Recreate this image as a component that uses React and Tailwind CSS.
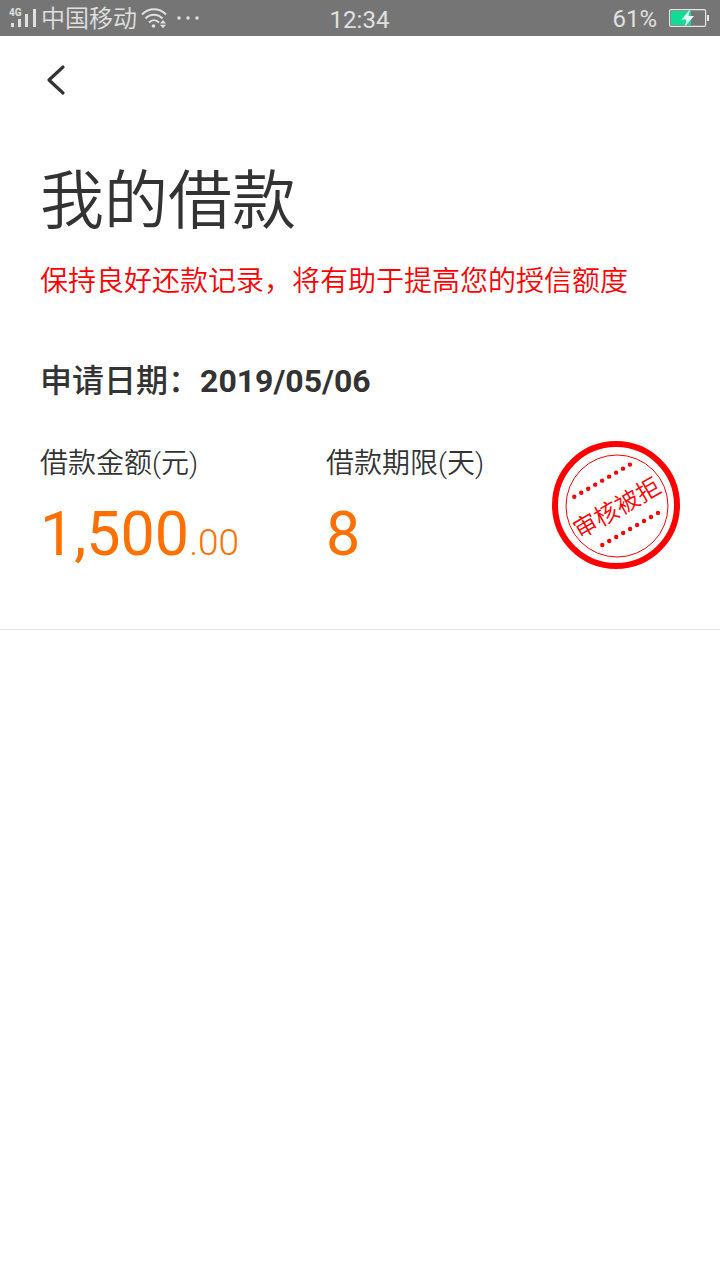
import React from 'react';

const loan = {
  date: '2019/05/06',
  amount: '1,500',
  cents: '.00',
  days: '8',
  status: '审核被拒',
};

function SignalIcon() {
  return (
    <svg width="28" height="22" viewBox="0 0 28 22" fill="#e0e0e0" aria-hidden="true">
      <text x="0" y="9" fontSize="10" fontWeight="700" fontFamily="Roboto">4G</text>
      <rect x="2" y="16" width="3" height="4" />
      <rect x="9" y="12" width="3" height="8" />
      <rect x="16" y="7" width="3" height="13" />
      <rect x="24" y="2" width="3" height="18" />
    </svg>
  );
}

function WifiIcon() {
  return (
    <svg width="26" height="22" viewBox="0 0 26 22" fill="none" stroke="#e0e0e0" strokeWidth="2" aria-hidden="true">
      <path d="M1 7.5C8 .6 18 .6 25 7.5" />
      <path d="M4.5 11.5C9.5 6.6 16.5 6.6 21.5 11.5" />
      <path d="M8 15.5C11 12.5 15 12.5 18 15.5" />
      <circle cx="12.5" cy="19" r="1.8" fill="#e0e0e0" stroke="none" />
      <path d="M19 16.5L22 13L25 16.5ZM19 17.7L22 21.2L25 17.7Z" fill="#e0e0e0" stroke="none" />
    </svg>
  );
}

function BatteryIcon() {
  return (
    <svg width="41" height="20" viewBox="0 0 41 20" fill="none" aria-hidden="true">
      <rect x="0.6" y="1.6" width="36" height="16.8" rx="1.5" stroke="#e6e6e6" strokeWidth="1.2" />
      <rect x="2" y="3" width="20" height="14" fill="#10dc96" />
      <rect x="38" y="7" width="2" height="6" fill="#e6e6e6" />
      <path d="M21 1.5L12.5 11.5H17.5L16 18.5L25 8H19.5Z" fill="#e6fff5" />
    </svg>
  );
}

function StatusBar() {
  return (
    <header className="grid h-9 grid-cols-3 items-center bg-[#757575] pr-[10px] pl-[9px] text-2xl text-[#e0e0e0]">
      <div className="flex items-center font-[350] whitespace-nowrap">
        <SignalIcon />
        <span className="ml-1 pt-[2px]">中国移动</span>
        <span className="ml-1"><WifiIcon /></span>
        <svg className="ml-2" width="26" height="6" viewBox="0 0 26 6" fill="#e0e0e0" aria-hidden="true">
          <circle cx="4" cy="3" r="1.8" />
          <circle cx="13" cy="3" r="1.8" />
          <circle cx="22" cy="3" r="1.8" />
        </svg>
      </div>
      <time className="pt-1 text-center">12:34</time>
      <div className="flex items-center justify-end gap-3">
        <span className="pt-[2px]">61%</span>
        <BatteryIcon />
      </div>
    </header>
  );
}

function Stamp({ label }) {
  return (
    <svg
      className="shrink-0"
      width="128"
      height="128"
      viewBox="0 0 128 128"
      fill="none"
      stroke="#ff0000"
      role="img"
      aria-label={label}
    >
      <circle cx="64" cy="64" r="61" strokeWidth="6" />
      <circle cx="65" cy="65" r="51" strokeWidth="1" />
      <path d="M22.3 55.7L78 23.6" strokeWidth="4.4" strokeLinecap="round" strokeDasharray="0 8.03" />
      <path d="M50.3 104L106 71.9" strokeWidth="4.4" strokeLinecap="round" strokeDasharray="0 8.03" />
      <text
        x="64"
        y="75"
        transform="rotate(-30 65 65)"
        textAnchor="middle"
        fontSize="24"
        fontWeight="350"
        fill="#ff0000"
        stroke="none"
      >
        {label}
      </text>
    </svg>
  );
}

export default function App() {
  return (
    <div className="min-h-screen bg-white font-[Roboto,'Noto_Sans_CJK_SC',sans-serif] text-[#333333]" lang="zh-CN">
      <StatusBar />

      <nav className="px-10 pt-6">
        <button type="button" aria-label="返回" className="block h-10 w-8">
          <svg width="32" height="40" viewBox="0 0 32 40" fill="none" stroke="#333333" strokeWidth="3.2" strokeLinecap="round" strokeLinejoin="round">
            <path d="M23 7L9 20L23 33" />
          </svg>
        </button>
      </nav>

      <main className="border-b border-[#e5e5e5] px-10 pt-[62px] pb-[60px]">
        <h1 className="text-[64px] leading-20 font-[350]">我的借款</h1>
        <p className="mt-5 text-[28px] leading-10 font-[350] text-[#ff0000]">保持良好还款记录，将有助于提高您的授信额度</p>

        <h2 className="mt-[59px] text-[32px] leading-10 font-medium">
          申请日期：<span className="font-bold">{loan.date}</span>
        </h2>

        {/* loan details */}
        <section className="mt-10 flex items-center">
          <div className="flex-[286]">
            <h3 className="text-[28px] leading-10 font-[350]">借款金额(元)</h3>
            <p className="mt-[18px] text-[61px] leading-16 text-[#ff7000]">
              {loan.amount}<span className="text-[37px] leading-none font-light">{loan.cents}</span>
            </p>
          </div>
          <div className="flex-[226]">
            <h3 className="text-[28px] leading-10 font-[350]">借款期限(天)</h3>
            <p className="mt-[18px] text-[61px] leading-16 text-[#ff7000]">{loan.days}</p>
          </div>
          <Stamp label={loan.status} />
        </section>
      </main>
    </div>
  );
}
